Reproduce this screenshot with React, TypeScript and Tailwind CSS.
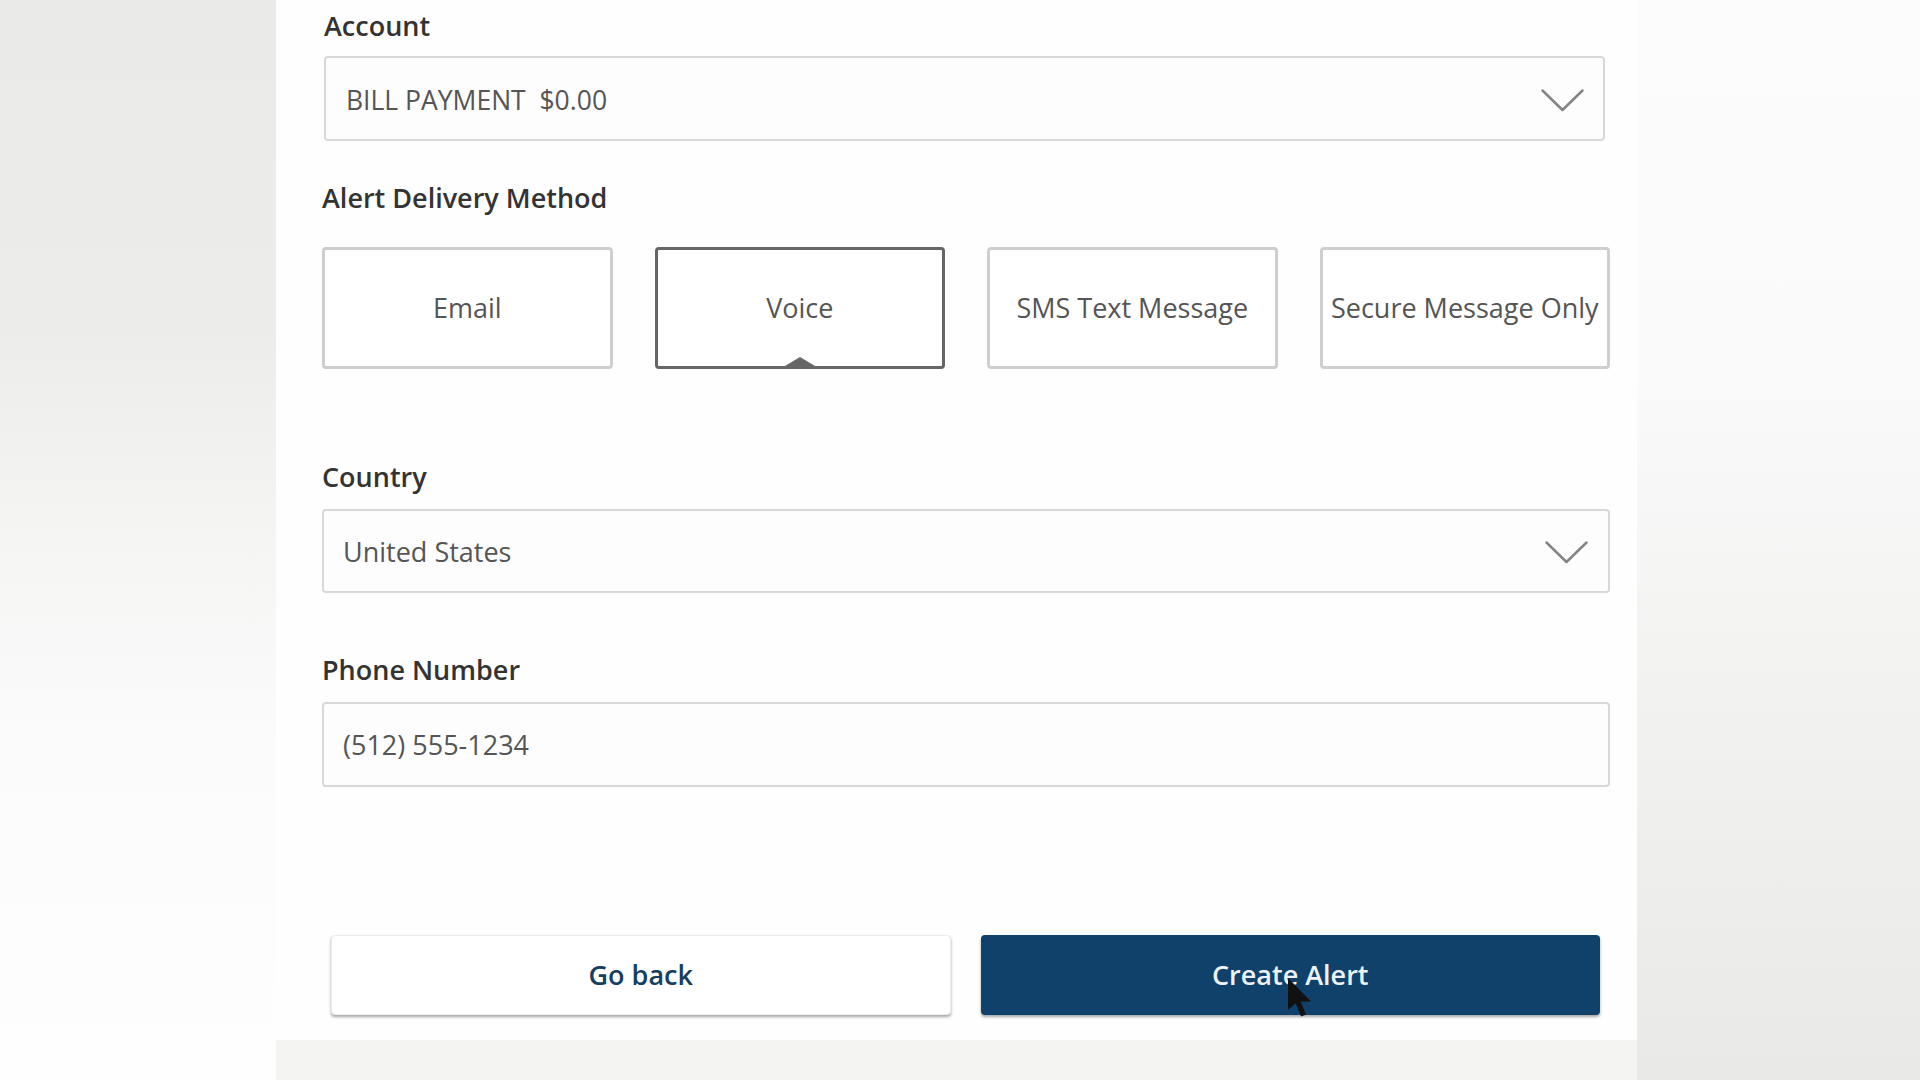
import React from "react";

const methods = ["Email", "Voice", "SMS Text Message", "Secure Message Only"];

const Chevron = () => (
  <svg width="43" height="23" viewBox="0 0 43 23" fill="none" className="shrink-0">
    <path d="M1.5 1.5 L21.5 21 L41.5 1.5" stroke="#848484" strokeWidth="2.5" strokeLinecap="round" strokeLinejoin="round" />
  </svg>
);

const Label = ({ children, className = "" }: { children: React.ReactNode; className?: string }) => (
  <div className={`text-[27px] font-semibold leading-[36px] text-[#333] ${className}`}>{children}</div>
);

export default function App() {
  const selected = "Voice";

  return (
    <div className="relative flex h-screen w-full overflow-hidden font-['Open_Sans',sans-serif]">
      <div className="w-[276px] shrink-0 bg-[linear-gradient(180deg,#eaeae9_0%,#ececeb_30%,#f5f5f4_50%,#fbfbfb_68%,#fefefe_100%)]" />

      <div className="flex w-[1361px] shrink-0 flex-col">
        <main className="h-[1040px] bg-[#fefefe] pl-[46px] pt-[8px]">
          <div className="flex w-[1288px] flex-col">
            <Label className="ml-[2px]">Account</Label>
            <div className="ml-[2px] mt-[12px] flex h-[85px] w-[1281px] items-center justify-between rounded-[4px] border-2 border-[#d8d8d8] bg-[#fdfdfd] pl-[20px] pr-[19px] pt-[4px]">
              <span className="text-[26.5px] text-[#555]">BILL PAYMENT&nbsp; $0.00</span>
              <Chevron />
            </div>

            <Label className="mt-[39px]">Alert Delivery Method</Label>
            <div className="mt-[31px] grid grid-cols-4 gap-[42px]">
              {methods.map((m) => {
                const active = m === selected;
                return (
                  <div
                    key={m}
                    className={`relative flex h-[122px] items-center justify-center whitespace-nowrap rounded-[4px] border-[3px] bg-white text-[27px] text-[#555] ${
                      active ? "border-[#666]" : "border-[#cecece]"
                    }`}
                  >
                    {m}
                    {active && (
                      <span className="absolute bottom-0 left-1/2 h-0 w-0 -translate-x-1/2 border-x-[15px] border-b-[9px] border-x-transparent border-b-[#666]" />
                    )}
                  </div>
                );
              })}
            </div>

            <Label className="mt-[90px]">Country</Label>
            <div className="mt-[14px] flex h-[84px] items-center justify-between rounded-[4px] border-2 border-[#d8d8d8] bg-[#fdfdfd] pl-[19px] pr-[20px] pt-[2px]">
              <span className="text-[27px] text-[#555]">United States</span>
              <Chevron />
            </div>

            <Label className="mt-[59px]">Phone Number</Label>
            <div className="mt-[14px] flex h-[85px] items-center rounded-[4px] border-2 border-[#d8d8d8] bg-[#fdfdfd] pl-[19px] pt-[2px]">
              <span className="text-[27px] text-[#555]">(512) 555-1234</span>
            </div>

            <div className="mt-[148px] grid grid-cols-2 gap-[30px] pl-[9px] pr-[10px]">
              <button className="h-[80px] rounded-[4px] border border-[#ececec] bg-white text-[27px] font-semibold text-[#163e5e] shadow-[0_2px_3px_rgba(0,0,0,0.35)]">
                Go back
              </button>
              <button className="h-[80px] rounded-[4px] bg-[#0f416a] text-[27px] font-semibold text-[#eef3f7] shadow-[0_2px_3px_rgba(0,0,0,0.35)]">
                Create Alert
              </button>
            </div>
          </div>
        </main>
        <div className="flex-1 bg-[#f4f4f3]" />
      </div>

      <div className="flex-1 bg-[linear-gradient(180deg,#fcfcfc_0%,#fafafa_35%,#f3f3f2_60%,#eeeeed_80%,#e9e9e8_100%)]" />

      <svg
        className="pointer-events-none absolute left-[1288px] top-[978px]"
        width="26"
        height="40"
        viewBox="0 0 13 20"
      >
        <path d="M0 0 L0 16 L3.8 12.6 L6.6 19.2 L9 18.2 L6.3 11.8 L11.5 11.8 Z" fill="#111" />
      </svg>
    </div>
  );
}
